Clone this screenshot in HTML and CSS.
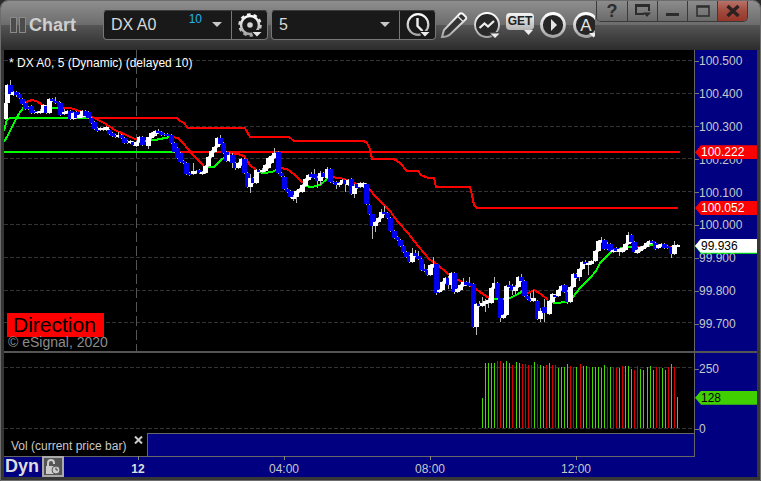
FILE: index.html
```html
<!DOCTYPE html>
<html lang="en">
<head>
    <meta charset="UTF-8">
    <meta name="viewport" content="width=device-width, initial-scale=1.0">
    <title>Chart</title>
    <link rel="stylesheet" href="styles.css">
</head>
<body>
    <div class="window">
        <header class="toolbar">
            <div class="grip"><i></i><i></i></div>
            <h1>Chart</h1>
            <div class="combo symbol">
                <input type="text" value="DX A0" aria-label="Symbol">
                <span class="delay">10</span>
                <button class="arrow" aria-label="Symbol list"></button>
                <button class="tool" aria-label="Settings">
                    <svg width="26" height="26" viewBox="0 0 26 26">
                        <circle cx="13" cy="13" r="9" fill="none" stroke="url(#silver)" stroke-width="2.500"/>
                        <circle cx="13" cy="13" r="10.500" fill="none" stroke="url(#silver)" stroke-width="2.500" stroke-dasharray="3.500 3.100"/>
                        <circle cx="13" cy="13" r="2.800" fill="#d4d4d4"/>
                        <path d="M14 18h12v4l-5 4h-4z" fill="#191919"/>
                        <path d="M15.500 20h9l-4.500 4.500z" fill="#e6e6e6"/>
                    </svg>
                </button>
            </div>
            <div class="combo interval">
                <input type="text" value="5" aria-label="Interval">
                <button class="arrow" aria-label="Interval list"></button>
                <button class="tool" aria-label="Time template">
                    <svg width="26" height="26" viewBox="0 0 26 26">
                        <circle cx="13" cy="12.500" r="10.300" fill="none" stroke="url(#silver)" stroke-width="2.200"/>
                        <path d="M12.500 6v8l5 5" fill="none" stroke="#eee" stroke-width="2.400"/>
                        <path d="M14 19h12v4l-5 3h-4z" fill="#191919"/>
                        <path d="M15.500 20h9l-4.500 4.500z" fill="#eee"/>
                    </svg>
                </button>
            </div>
            <div class="tools">
                <button class="tool" aria-label="Draw">
                    <svg width="28" height="28" viewBox="0 0 28 28">
                        <path d="M2 26L4 19L19.500 3Q21 1.500 23 3L25.500 5.500Q27 7 25.500 8.500L10 23.500Q7 26 2 26Z" fill="#333" stroke="url(#silver)" stroke-width="2"/>
                        <path d="M17.500 5l6 6" fill="none" stroke="#ddd" stroke-width="1.500"/>
                    </svg>
                </button>
                <button class="tool" aria-label="Studies">
                    <svg width="28" height="28" viewBox="0 0 28 28">
                        <circle cx="14" cy="14" r="12" fill="#292929" stroke="url(#silver)" stroke-width="2"/>
                        <path d="M6.500 17l5-4.500 3.500 3 6-5.500" fill="none" stroke="#eee" stroke-width="2.200"/>
                        <path d="M16 21h12v6h-8z" fill="#444"/>
                        <path d="M17.500 22.500h9l-4.500 4.500z" fill="#eee"/>
                    </svg>
                </button>
                <button class="tool get" aria-label="GET">
                    <span>GET</span>
                    <svg width="10" height="6" viewBox="0 0 10 6"><path d="M0 0h9L4.500 5z" fill="#eee"/></svg>
                </button>
                <button class="tool" aria-label="Play">
                    <svg width="28" height="28" viewBox="0 0 28 28">
                        <circle cx="14" cy="14" r="11.500" fill="#262626" stroke="url(#silver)" stroke-width="2.800"/>
                        <path d="M12 8l6 6-6 6z" fill="#e4e4e4"/>
                    </svg>
                </button>
                <button class="tool" aria-label="Alerts">
                    <svg width="28" height="28" viewBox="0 0 28 28">
                        <circle cx="14" cy="14" r="11.500" fill="#262626" stroke="url(#silver)" stroke-width="2.800"/>
                        <text x="14" y="20" class="letter">A</text>
                        <path d="M17 22h9l-4.500 4.500z" fill="#eee"/>
                    </svg>
                </button>
            </div>
            <div class="controls">
                <button aria-label="Help">?</button>
                <button aria-label="Dock">
                    <svg width="16" height="14" viewBox="0 0 16 14"><path d="M9 10H1V1h13v6M1 2h13" fill="none" stroke="#2c2c2c" stroke-width="2"/><path d="M8 8.500h8l-4 4.500z" fill="#2c2c2c"/></svg>
                </button>
                <button aria-label="Minimize">
                    <svg width="16" height="14" viewBox="0 0 16 14"><path d="M1 9h13v3H1z" fill="#2c2c2c"/></svg>
                </button>
                <button aria-label="Maximize">
                    <svg width="16" height="14" viewBox="0 0 16 14"><path d="M2 2h12v10H2zM2 3h12" fill="none" stroke="#2c2c2c" stroke-width="1.500"/></svg>
                </button>
                <button class="close" aria-label="Close">
                    <svg width="16" height="14" viewBox="0 0 16 14"><path d="M2.500 2l11 10M13.500 2l-11 10" stroke="#2c2020" stroke-width="3.400"/></svg>
                </button>
            </div>
        </header>

        <main class="chart">
            <section class="pane price">
                <div class="plot">
                    <svg id="price" viewBox="4 50 690 301" preserveAspectRatio="none"></svg>
                    <p class="legend">* DX A0, 5 (Dynamic) (delayed 10)</p>
                    <div class="note">
                        <strong>Direction</strong>
                        <small>© eSignal, 2020</small>
                    </div>
                </div>
                <div class="axis">
                    <span>100.500</span>
                    <span>100.400</span>
                    <span>100.300</span>
                    <span>100.200</span>
                    <span>100.100</span>
                    <span>100.000</span>
                    <span>99.900</span>
                    <span>99.800</span>
                    <span>99.700</span>
                    <b class="tag upper">100.222</b>
                    <b class="tag lower">100.052</b>
                    <b class="tag under"></b>
                    <b class="tag last">99.936</b>
                </div>
            </section>
            <section class="pane volume">
                <div class="plot">
                    <svg id="volume" viewBox="4 353 690 80" preserveAspectRatio="none"></svg>
                </div>
                <div class="axis">
                    <span>250</span>
                    <span>0</span>
                    <b class="tag vol">128</b>
                </div>
            </section>
            <div class="tabs">
                <div class="tab">Vol (current price bar)
                    <button aria-label="Close tab">
                        <svg width="9" height="8" viewBox="0 0 9 8"><path d="M1 0.500l7 7M8 0.500l-7 7" stroke="#ccc" stroke-width="2"/></svg>
                    </button>
                </div>
                <div class="strip"></div>
                <div class="corner"></div>
            </div>
        </main>

        <footer class="timeline">
            <div class="mode">
                Dyn
                <button aria-label="Lock time">
                    <svg width="16" height="16" viewBox="0 0 16 16">
                        <path d="M3 8V4q0-3 3-3t3 3v1" fill="none" stroke="#ccc" stroke-width="2"/>
                        <path d="M1 7h9v8H1z" fill="#ccc"/>
                        <circle cx="11" cy="11" r="4" fill="#ccc" stroke="#555"/>
                        <path d="M11 8.500V11h2" fill="none" stroke="#444"/>
                    </svg>
                </button>
            </div>
            <time class="day">12</time>
            <time>04:00</time>
            <time>08:00</time>
            <time>12:00</time>
            <div class="rest"></div>
        </footer>
    </div>

    <svg class="defs" width="0" height="0">
        <linearGradient id="silver" x1="0" y1="0" x2="0" y2="1">
            <stop offset="0" stop-color="#ffffff"/>
            <stop offset="1" stop-color="#a4a4a4"/>
        </linearGradient>
    </svg>
    <script src="chart.js"></script>
</body>
</html>
```
FILE: styles.css
```css
* {
    box-sizing: border-box;
}

body {
    margin: 0;
    background-color: #2b2b2b;
    font-family: "Liberation Sans", Arial, sans-serif;
    font-size: 12px;
    color: #c8c8c8;
}

button {
    padding: 0;
    border: 0;
    background: none;
    color: inherit;
    font-family: inherit;
    cursor: pointer;
}

.defs {
    position: absolute;
}

.window {
    display: flex;
    flex-direction: column;
    height: 100vh;
    min-height: 320px;
    border: 1px solid #6c6c6c;
    border-radius: 8px 8px 0 0;
    background-color: #363636;
    overflow: hidden;
}

/* toolbar */
.toolbar {
    position: relative;
    display: flex;
    align-items: center;
    flex: none;
    height: 49px;
    padding: 0 0 2px 9px;
    background: linear-gradient(#8e8e8e, #6c6c6c 49%, #545454 50%, #2c2c2c);
    overflow: hidden;
}

.grip {
    display: flex;
    gap: 2px;
    margin-right: 3px;
}

.grip i {
    width: 7px;
    height: 16px;
    border: 1px solid #8a8a8a;
    background-color: #4c4c4c;
}

h1 {
    width: 74px;
    margin: 0;
    font-size: 18px;
    line-height: 22px;
    color: #cfcfcf;
}

.combo {
    display: flex;
    align-items: center;
    flex: none;
    width: 165px;
    height: 30px;
    margin-right: 3px;
    border: 1px solid #777;
    border-top-color: #3c3c3c;
    border-radius: 4px;
    background-color: #191919;
}

.combo input {
    flex: 1;
    min-width: 0;
    height: 28px;
    padding: 0 7px;
    border: 0;
    background: none;
    color: #d8d8d8;
    font-family: inherit;
    font-size: 16px;
}

.delay {
    align-self: flex-start;
    line-height: 16px;
    color: #22b4f4;
}

.arrow {
    width: 29px;
    height: 28px;
}

.arrow::before {
    content: "";
    display: block;
    width: 0;
    margin: 0 auto;
    border: 5px solid transparent;
    border-top-color: #c8c8c8;
    border-bottom: 0;
}

.combo .tool {
    width: 36px;
    height: 28px;
    border-left: 1px solid #777;
}

.tool svg {
    display: block;
    margin: 0 auto;
}

.tools {
    display: flex;
    gap: 5px;
    width: 155px;
    margin-left: 1px;
    overflow: hidden;
}

.tools .tool {
    flex: none;
    width: 28px;
    height: 28px;
}

.get span {
    display: block;
    height: 17px;
    border-radius: 4px;
    background: linear-gradient(#f4f4f4, #b4b4b4);
    color: #222;
    font-size: 12px;
    font-weight: bold;
    line-height: 17px;
}

.get svg {
    margin: 0 0 0 auto;
}

.letter {
    fill: #e4e4e4;
    font-size: 17px;
    text-anchor: middle;
}

.controls {
    position: absolute;
    top: 0;
    right: 12px;
    display: flex;
    height: 21px;
    border: 1px solid #3a3a3a;
    border-top: 0;
    border-radius: 0 0 5px 5px;
    background-color: #777;
    overflow: hidden;
}

.controls button {
    display: flex;
    align-items: center;
    justify-content: center;
    width: 30px;
    border-left: 1px solid #3a3a3a;
    background: linear-gradient(#8c8c8c, #6a6a6a);
    color: #2c2c2c;
    font-size: 18px;
    font-weight: bold;
    line-height: 20px;
}

.controls button:first-child {
    border-left: 0;
}

.controls .close {
    background: linear-gradient(#b87268, #a24a3e 50%, #963628);
}

/* panes */
.chart {
    display: flex;
    flex-direction: column;
    flex: 1;
    min-height: 0;
    margin: 0 3px;
}

.pane {
    display: flex;
}

.price {
    flex: 1;
    min-height: 0;
    border-bottom: 2px solid #555;
}

.volume {
    flex: none;
    height: 80px;
}

.plot {
    position: relative;
    flex: 1;
    min-width: 0;
    background-color: #000;
}

.plot > svg {
    position: absolute;
    width: 100%;
    height: 100%;
    shape-rendering: crispEdges;
}

.legend {
    position: absolute;
    top: 6px;
    left: 5px;
    margin: 0;
    line-height: 14px;
    color: #fff;
}

.note {
    position: absolute;
    left: 3px;
    bottom: 4px;
    display: flex;
    flex-direction: column;
    align-items: flex-start;
}

.note strong {
    padding: 0 8px 0 6px;
    background-color: #f00;
    color: #000;
    font-size: 21px;
    font-weight: normal;
    line-height: 24px;
}

.note small {
    padding-left: 1px;
    font-size: 14px;
    line-height: 10px;
    color: #8c8c8c;
}

.axis {
    position: relative;
    display: flex;
    flex-direction: column;
    justify-content: space-between;
    flex: none;
    width: 63px;
    border-left: 1px solid #666;
    background-color: #000080;
}

.price .axis {
    padding: 1px 0 17px;
}

.volume .axis {
    padding: 6px 0 0;
    justify-content: flex-start;
    gap: 40px;
}

.axis span {
    display: flex;
    align-items: center;
    line-height: 20px;
}

.axis span::before {
    content: "";
    width: 4px;
    height: 1px;
    background-color: #777;
}

.tag {
    position: absolute;
    left: 0;
    right: 0;
    height: 14px;
    margin-top: -7px;
    padding-left: 6px;
    clip-path: polygon(0 50%, 6px 0, 100% 0, 100% 100%, 6px 100%);
    font-weight: normal;
    line-height: 14px;
}

.upper,
.lower {
    background-color: #f00;
    color: #fff;
}

.upper {
    top: 34%;
}

.lower {
    top: 52.5%;
}

.last {
    top: 65%;
    background-color: #fff;
    color: #000;
}

.under {
    top: 65%;
    height: 15px;
    background-color: #0f0;
}

.vol {
    top: 56%;
    background-color: #40d000;
    color: #000;
}

.tabs {
    display: flex;
    flex: none;
    height: 23px;
    background-color: #000080;
}

.tab {
    display: flex;
    width: 143px;
    padding-left: 7px;
    background-color: #000;
    line-height: 26px;
    white-space: nowrap;
}

.tab button {
    height: 14px;
    margin-left: auto;
    padding-right: 4px;
    line-height: 14px;
}

.strip {
    flex: 1;
    border: 1px solid #666;
    border-width: 1px 0 0 1px;
}

.corner {
    width: 63px;
    border-left: 1px solid #666;
}

/* timeline */
.timeline {
    display: flex;
    flex: none;
    height: 21px;
    margin: 0 3px 3px;
    background: linear-gradient(#666, #666) 0 0 / calc(100% - 62px) 1px no-repeat #000080;
}

.mode {
    display: flex;
    align-items: center;
    gap: 3px;
    width: 61px;
    padding-left: 1px;
    color: #ddd;
    font-size: 18px;
    font-weight: bold;
    line-height: 21px;
}

.mode button {
    display: flex;
    align-items: center;
    justify-content: center;
    flex: none;
    width: 22px;
    height: 21px;
    border: 2px solid #aaa;
    background-color: #555;
}

.timeline time {
    flex: 146;
    padding-top: 6px;
    background: linear-gradient(#888, #888) center top / 1px 4px no-repeat;
    line-height: 14px;
    text-align: center;
}

.timeline .day {
    color: #ddd;
    font-weight: bold;
}

.rest {
    flex: 108;
}
```
FILE: chart.js
```js
// [x, body top, body bottom, high, low], up bars are white, down bars are blue
const up = [
    [5, 103, 119], [7, 85, 103], [13, 92, 95], [37, 112, 113], [40, 111, 113, 109], [43, 105, 112],
    [49, 99, 113], [64, 112, 114, 109], [67, 111, 113], [73, 113, 119], [79, 115, 118], [82, 111, 117],
    [100, 128, 130], [103, 128, 130], [106, 127, 130, 126], [118, 135, 137, 132], [130, 141, 143],
    [136, 142, 146], [139, 137, 142], [148, 137, 146, 137, 149], [151, 133, 138], [154, 132, 136],
    [155, 131, 134], [193, 171, 174, 163], [196, 171, 173], [202, 172, 174], [205, 166, 173],
    [208, 157, 166], [211, 151, 157], [214, 147, 152], [217, 138, 147], [229, 155, 161],
    [238, 163, 168], [241, 159, 165], [250, 178, 187, 174, 193], [256, 170, 183], [262, 170, 172, 168],
    [265, 165, 171], [268, 158, 168], [271, 156, 163], [274, 153, 158, 148], [293, 197, 199, 195, 201],
    [296, 191, 197, 190, 203], [299, 189, 192], [302, 185, 192], [305, 179, 186], [308, 175, 180],
    [320, 173, 181, 171, 185], [327, 169, 178, 167], [339, 183, 185, 182, 187], [342, 180, 183],
    [348, 180, 185], [354, 186, 194, 184, 198], [360, 183, 187], [363, 183, 187], [375, 222, 226, 221, 232],
    [378, 218, 222], [381, 212, 218, 209], [412, 253, 262, 248], [430, 265, 275], [433, 264, 267, 257],
    [439, 290, 292], [442, 282, 290], [445, 278, 283], [451, 273, 285, 272, 289], [457, 289, 292],
    [460, 285, 290], [463, 282, 286, 278], [476, 304, 327, 303, 335], [482, 303, 306, 297],
    [485, 301, 304, 299, 312], [488, 300, 303, 298, 308], [491, 288, 303], [494, 283, 288, 277],
    [503, 315, 318], [506, 286, 315], [515, 287, 291, 285, 294], [518, 277, 287], [533, 298, 301, 290],
    [540, 311, 319, 308, 322], [549, 301, 314], [552, 294, 302], [558, 290, 296], [561, 286, 290],
    [570, 287, 302], [573, 274, 287], [579, 269, 277, 268, 281], [582, 262, 269], [588, 263, 265, 261, 275],
    [591, 261, 264], [595, 251, 261], [598, 241, 251], [601, 240, 242, 237], [613, 250, 252],
    [619, 249, 252, 248, 256], [622, 248, 252, 247, 253], [625, 244, 250], [628, 235, 244, 232],
    [637, 250, 253], [640, 247, 251], [643, 246, 249], [646, 243, 247], [649, 241, 244],
    [658, 245, 248], [661, 244, 246], [674, 245, 254, 241], [677, 245, 247, 244, 247]
];
const down = [
    [10, 85, 94, 80], [16, 92, 95, 91, 97], [19, 94, 98], [22, 99, 104], [25, 103, 109], [28, 107, 109],
    [31, 106, 113, 105, 114], [34, 111, 113], [46, 106, 113], [52, 99, 101], [55, 101, 103, 97],
    [59, 102, 107], [60, 103, 115], [70, 111, 119], [76, 112, 118], [85, 111, 116], [88, 112, 118],
    [91, 118, 123], [94, 122, 129], [97, 128, 131], [109, 130, 134], [112, 133, 136], [115, 135, 137],
    [121, 135, 138], [124, 138, 143], [127, 141, 143], [133, 142, 145], [142, 137, 145],
    [158, 131, 133, 129], [161, 132, 135], [164, 134, 135], [167, 134, 136], [171, 135, 143],
    [174, 143, 152], [177, 148, 158], [180, 153, 162], [183, 161, 163], [186, 163, 174],
    [189, 173, 175], [199, 170, 173], [220, 138, 144, 135], [223, 143, 153], [226, 152, 161],
    [232, 155, 163, 153, 168], [235, 163, 168, 162, 170], [244, 159, 173], [247, 173, 187],
    [253, 178, 183], [259, 170, 172], [278, 152, 173], [281, 173, 176], [284, 177, 189],
    [287, 189, 192], [290, 191, 197], [311, 174, 177, 172], [314, 174, 178, 169], [317, 178, 181, 176, 188],
    [323, 173, 177], [330, 169, 182], [333, 182, 183], [336, 182, 185, 181, 189], [345, 180, 184, 179, 192],
    [351, 179, 194], [357, 184, 188], [366, 184, 204], [369, 205, 214], [372, 214, 226, 214, 239],
    [384, 212, 214, 206], [387, 213, 218], [390, 218, 231], [394, 231, 238], [397, 237, 240],
    [400, 240, 246], [403, 246, 252], [406, 252, 257], [409, 256, 262], [415, 253, 256, 250],
    [418, 256, 259, 251], [421, 259, 270], [424, 269, 271, 264], [427, 270, 275], [436, 264, 293, 264, 295],
    [448, 278, 285, 276, 289], [454, 273, 292, 272, 294], [466, 282, 285], [469, 283, 286, 277],
    [473, 284, 327], [479, 304, 306, 301], [497, 283, 298], [500, 298, 318, 298, 322], [509, 285, 287, 281],
    [512, 286, 290, 284, 295], [521, 277, 281, 274], [524, 281, 296], [527, 296, 299], [530, 299, 301, 293],
    [537, 301, 319, 300, 320], [544, 307, 313, 299, 322], [555, 295, 297], [564, 285, 292], [567, 292, 302, 290, 304],
    [576, 274, 278], [585, 262, 264, 260], [604, 240, 249, 239], [607, 244, 249, 242], [610, 244, 251],
    [616, 248, 251], [631, 235, 242], [634, 242, 252], [652, 241, 243], [655, 243, 249, 242, 250],
    [664, 244, 248], [667, 246, 248], [671, 247, 254, 246, 258]
];

const lines = [
    ['#0f0', '4,131 7,119 11,118 88,118'],
    ['#f00', '88,118 177,118 180,121 184,123 188,128 245,128 250,137 289,137 294,141 364,141 367,143 370,149 372,159 394,159 400,163 407,171 418,171 421,175 428,178 434,178 436,187 470,187 472,195 474,205 477,208 678,208'],
    ['#0f0', '4,152 176,152'],
    ['#f00', '176,152 680,152'],
    ['#0f0', '4,142 8,135 14,123 20,112 25,106'],
    ['#f00', '25,103 28,101 33,100 38,102 44,106'],
    ['#0f0', '48,108 60,108'],
    ['#f00', '60,108 70,108 80,111 90,116 104,123 115,130 128,136 138,140'],
    ['#0f0', '145,141 155,140 170,137'],
    ['#f00', '172,137 178,138 183,143 193,155 204,166'],
    ['#0f0', '206,167 214,167 220,161 226,156 230,153'],
    ['#f00', '230,153 238,154 244,156 250,165 256,170'],
    ['#0f0', '258,172 264,173 272,172 278,169'],
    ['#f00', '280,168 287,169 295,175 303,183'],
    ['#0f0', '305,186 312,187 320,185 327,179'],
    ['#f00', '330,177 340,178 350,181 357,184'],
    ['#0f0', '357,185 366,185'],
    ['#f00', '366,185 375,196 384,205 390,211 398,222 408,233 418,246 430,260 437,264 448,274 456,279 463,282 470,285 480,292 489,298'],
    ['#0f0', '490,299 500,299 510,298 518,294 524,290'],
    ['#f00', '526,294 534,290 541,294 548,300'],
    ['#0f0', '550,302 556,303 566,302 573,297 580,288 590,278 596,271 600,263 606,257 611,252 618,249 628,247 634,247'],
    ['#f00', '636,247 643,247'],
    ['#0f0', '644,247 652,245 658,246'],
    ['#f00', '659,246 675,247']
];

// volume heights and their colours (g = up, r = down)
const volume = [
    30, 65, 65, 65, 65, 67, 67, 65, 67, 65, 63, 66, 65, 64, 64, 63, 63, 66, 64, 63, 62, 63, 65, 63, 63, 60,
    61, 61, 64, 62, 61, 61, 64, 62, 62, 61, 61, 61, 61, 60, 63, 60, 61, 60, 60, 60, 62, 62, 62, 59, 58, 62,
    59, 58, 61, 62, 58, 61, 61, 60, 58, 61, 64, 61, 31
];
const volumeColors = 'gggggrrgggrggrrrrgrggrgrrggggrrgrggrgggggrgrrgrgggrrgggggrrgg' + 'rgrgg';

function line(x1, y1, x2, y2, attrs) {
    return `<line x1="${x1}" y1="${y1}" x2="${x2}" y2="${y2}" ${attrs}/>`;
}

function grid(levels) {
    return levels.map(y => line(4, y + 0.5, 694, y + 0.5, 'stroke="#333" stroke-dasharray="4 2"')).join('');
}

function candles(list, color) {
    return list.map(([x, top, bottom, high = top - 1, low = bottom + 1]) => ({
        x,
        html: `<rect x="${x}" y="${high}" width="1" height="${low - high}" fill="#bbb"/>` +
            `<rect x="${x - 2}" y="${top}" width="5" height="${bottom - top}" fill="${color}"/>`
    }));
}

function drawPrice() {
    const bars = candles(up, '#fff').concat(candles(down, '#0000f0')).sort((a, b) => a.x - b.x);
    document.getElementById('price').innerHTML =
        grid([60, 93, 126, 158, 191, 224, 257, 290, 322]) +
        line(136.5, 50, 136.5, 351, 'stroke="#555" stroke-dasharray="10 4"') +
        lines.map(([color, points]) =>
            `<polyline points="${points}" fill="none" stroke="${color}" stroke-width="2"/>`).join('') +
        bars.map(bar => bar.html).join('');
}

function drawVolume() {
    document.getElementById('volume').innerHTML = grid([367, 428]) +
        volume.map((height, i) => {
            const x = 482 + Math.round(i * 3.047);
            const color = volumeColors[i] === 'r' ? '#d80000' : '#44d800';
            return `<rect x="${x}" y="${428 - height}" width="1" height="${height}" fill="${color}"/>`;
        }).join('');
}

drawPrice();
drawVolume();
```
